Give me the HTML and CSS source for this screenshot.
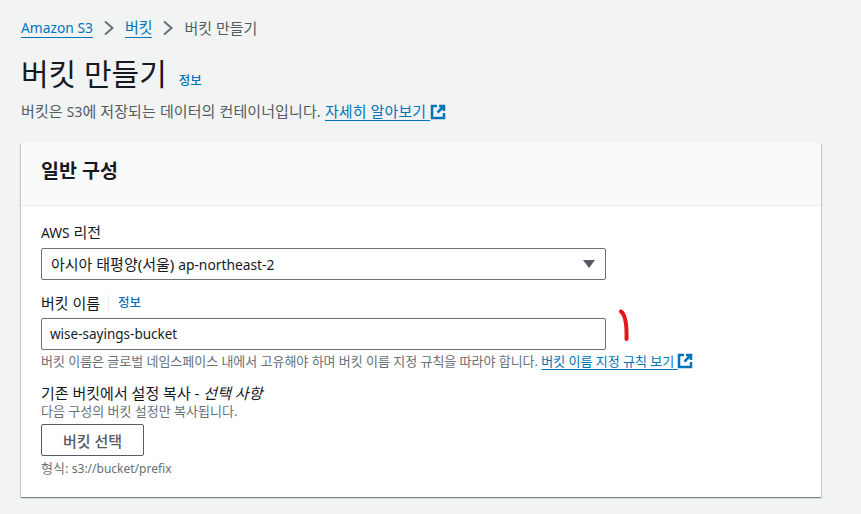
FILE: index.html
```html
<!DOCTYPE html>
<html lang="ko">
<head>
  <meta charset="UTF-8">
  <meta name="viewport" content="width=device-width, initial-scale=1.0">
  <title>버킷 만들기</title>
  <link rel="stylesheet" href="styles.css">
</head>
<body>
  <nav class="breadcrumb">
    <a class="link lat" href="#">Amazon S3</a>
    <svg class="crumb-sep" viewBox="0 0 12 16"><path d="M2 1.5 9.5 8 2 14.5"/></svg>
    <a class="link" href="#">버킷</a>
    <svg class="crumb-sep" viewBox="0 0 12 16"><path d="M2 1.5 9.5 8 2 14.5"/></svg>
    <span class="crumb-current">버킷 만들기</span>
  </nav>

  <div class="page-title">
    <h1>버킷 만들기</h1>
    <a class="info" href="#">정보</a>
  </div>
  <p class="page-desc">
    버킷은 <span class="lat">S3</span>에 저장되는 데이터의 컨테이너입니다.
    <a class="link" href="#">자세히 알아보기&nbsp;</a><svg class="ext" viewBox="0 0 16 16"><path d="M7 2H2v12h12V9"/><path d="M9 2h5v5M14 2 7.500 8.500"/></svg>
  </p>

  <section class="card">
    <header class="card-head">
      <h2>일반 구성</h2>
    </header>
    <div class="card-body">
      <div class="field region-field">
        <label class="field-label"><span class="lat">AWS</span> 리전</label>
        <div class="input select">
          <span>아시아 태평양(서울) <span class="lat">ap-northeast-2</span></span>
          <span class="caret"></span>
        </div>
      </div>

      <div class="field name-field">
        <div class="label-row">
          <label class="field-label">버킷 이름</label>
          <a class="info" href="#">정보</a>
        </div>
        <div class="input-wrap">
          <div class="input name-input">wise-sayings-bucket</div>
          <!-- 빨간 손글씨 표시 -->
          <svg class="mark" viewBox="0 0 14 32"><path d="M3 2.500C6.500 5 9 11 8.500 30"/></svg>
        </div>
        <p class="hint">
          버킷 이름은 글로벌 네임스페이스 내에서 고유해야 하며 버킷 이름 지정 규칙을 따라야 합니다.
          <a class="link" href="#">버킷 이름 지정 규칙 보기&nbsp;</a><svg class="ext" viewBox="0 0 16 16"><path d="M7 2H2v12h12V9"/><path d="M9 2h5v5M14 2 7.500 8.500"/></svg>
        </p>
      </div>

      <div class="field copy-field">
        <div class="field-label">기존 버킷에서 설정 복사 - <em>선택 사항</em></div>
        <p class="hint">다음 구성의 버킷 설정만 복사됩니다.</p>
        <button class="btn" type="button">버킷 선택</button>
        <p class="hint format">형식: <span class="lat">s3://bucket/prefix</span></p>
      </div>
    </div>
  </section>
</body>
</html>
```

FILE: styles.css
```css
* {
  margin: 0;
  padding: 0;
  box-sizing: border-box;
}

body {
  font-family: "Noto Sans", "Noto Sans CJK KR", sans-serif;
  background-color: #f2f3f3;
  color: #16191f;
  font-size: 15px;
  line-height: 20px;
  padding: 18px 40px 0 21px;
  height: 514px;
  overflow: hidden;
}

.lat {
  font-size: 13.8px;
}

.link {
  color: #0073bb;
  text-decoration: none;
  border-bottom: 1px solid #0073bb;
}

.breadcrumb {
  display: flex;
  align-items: center;
  height: 20px;
}

.breadcrumb .link {
  line-height: 19px;
}

.crumb-sep {
  width: 12px;
  height: 16px;
  margin: 0 10px;
  fill: none;
  stroke: #687078;
  stroke-width: 2;
}

.crumb-current {
  color: #545b64;
}

.page-title {
  display: flex;
  align-items: baseline;
  gap: 12px;
  margin-top: 18px;
}

h1 {
  font-size: 30px;
  line-height: 36px;
  font-weight: 400;
}

.info {
  color: #0073bb;
  font-size: 12.5px;
  font-weight: 500;
  text-decoration: none;
}

.page-desc {
  margin-top: 9px;
  color: #545b64;
  letter-spacing: 0.1px;
}

.page-desc .link,
.hint .link {
  border-bottom: none;
  text-decoration: underline;
  text-decoration-thickness: 1px;
  text-underline-offset: 3px;
}

.page-desc .link {
  letter-spacing: 0.1px;
}

.ext {
  width: 16px;
  height: 16px;
  vertical-align: -3px;
  fill: none;
  stroke: #0073bb;
  stroke-width: 2.500;
}

.card {
  margin-top: 21px;
  background-color: #ffffff;
  box-shadow: 0 1px 1px 0 rgba(0, 28, 36, 0.3), 1px 1px 1px 0 rgba(0, 28, 36, 0.15), -1px 1px 1px 0 rgba(0, 28, 36, 0.15);
}

.card-head {
  height: 63px;
  padding: 17px 20px;
  background-color: #fafafa;
  border-bottom: 1px solid #eaeded;
}

h2 {
  font-size: 19.5px;
  line-height: 22px;
  font-weight: 700;
}

.card-body {
  padding: 16px 20px 20px;
}

.field-label {
  display: block;
  line-height: 20px;
}

.input {
  display: flex;
  align-items: center;
  justify-content: space-between;
  width: 565px;
  height: 32px;
  margin-top: 5px;
  padding: 0 9px;
  background-color: #ffffff;
  border: 1px solid #687078;
  border-radius: 2px;
}

.name-input {
  padding: 0 8px;
  font-size: 13.5px;
}

.caret {
  width: 0;
  height: 0;
  margin-right: 1px;
  border-left: 6px solid transparent;
  border-right: 6px solid transparent;
  border-top: 8px solid #545b64;
}

.name-field {
  margin-top: 13px;
}

.label-row {
  display: flex;
  align-items: center;
}

.label-row .info {
  margin-left: 8px;
  padding-left: 9px;
  border-left: 1px solid #eaeded;
  line-height: 18px;
}

.label-row + .input-wrap .input {
  margin-top: 5px;
}

.input-wrap {
  position: relative;
}

.mark {
  position: absolute;
  left: 577px;
  top: -9px;
  width: 14px;
  height: 32px;
  fill: none;
  stroke: #e8141c;
  stroke-width: 4;
  stroke-linecap: round;
}

.hint {
  color: #687078;
  font-size: 13px;
  line-height: 16px;
}

.hint .lat {
  font-size: 12px;
}

.name-field .hint {
  margin-top: 3px;
  letter-spacing: -0.03px;
}

.copy-field {
  margin-top: 14px;
}

.copy-field em {
  font-style: italic;
}

.btn {
  display: block;
  width: 103px;
  height: 32px;
  margin-top: 5px;
  background-color: #ffffff;
  border: 1px solid #545b64;
  border-radius: 2px;
  color: #545b64;
  font-family: inherit;
  font-size: 15px;
  font-weight: 500;
}

.format {
  margin-top: 4px;
}
```
